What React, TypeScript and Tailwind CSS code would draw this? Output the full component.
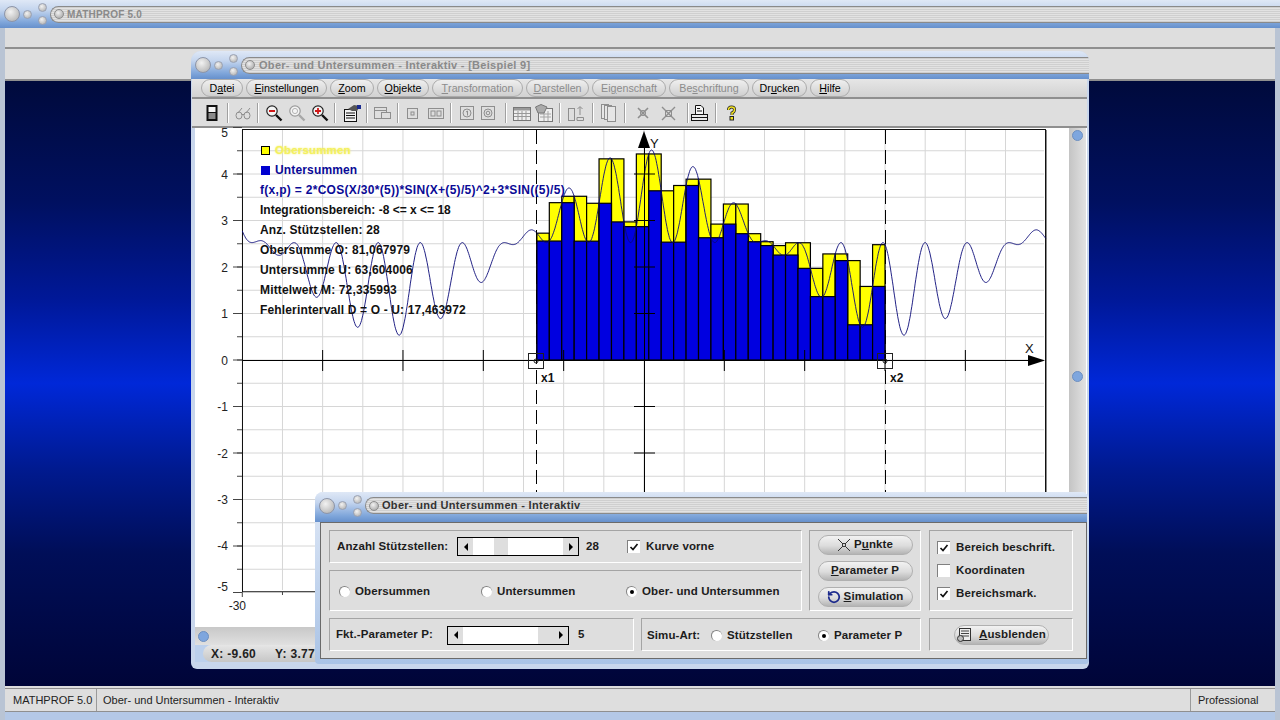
import { ReactNode } from "react";
import { RotateCcw } from "lucide-react";

const f = (x: number) => 2 * Math.cos((x / 30) * 5) * Math.sin(x + 1) ** 2 + 3 * Math.sin(1);
const sx = (x: number) => 644 + x * 13.39;
const sy = (v: number) => 360 - v * 46.5;

const curve = Array.from({ length: 1201 }, (_, i) => {
  const x = -30 + i * 0.05;
  return `${sx(x).toFixed(1)},${sy(f(x)).toFixed(1)}`;
}).join(" ");

// the app only samples the end points of each interval, so peaks poke out of the bars
const bars = Array.from({ length: 28 }, (_, i) => {
  const step = 26 / 28;
  const a = -8 + i * step;
  const b = a + step;
  return { x: sx(a), w: sx(b) - sx(a), hi: Math.max(f(a), f(b)), lo: Math.min(f(a), f(b)) };
});

const gridX = Array.from({ length: 21 }, (_, i) => -30 + i * 3);
const gridY = Array.from({ length: 19 }, (_, i) => -4.5 + i * 0.5);
const wholeY = [5, 4, 3, 2, 1, 0, -1, -2, -3, -4, -5];
const tickX = [-24, -18, -12, -6, 6, 12, 18, 24];
const labelY: Record<number, number> = { 5: 133, 4: 175, 3: 221, 2: 268, 1: 314, 0: 361, [-1]: 407, [-2]: 454, [-3]: 500, [-4]: 546, [-5]: 587 };

const menu = [
  { pre: "D", u: "a", post: "tei", w: "w-[42px]", on: true },
  { pre: "", u: "E", post: "instellungen", w: "w-[81px]", on: true },
  { pre: "", u: "Z", post: "oom", w: "w-[44px]", on: true },
  { pre: "", u: "O", post: "bjekte", w: "w-[52px]", on: true },
  { pre: "", u: "T", post: "ransformation", w: "w-[91px]", on: false },
  { pre: "", u: "D", post: "arstellen", w: "w-[63px]", on: false },
  { pre: "Ei", u: "g", post: "enschaft", w: "w-[74px]", on: false },
  { pre: "Be", u: "s", post: "chriftung", w: "w-[80px]", on: false },
  { pre: "Dr", u: "u", post: "cken", w: "w-[55px]", on: true },
  { pre: "", u: "H", post: "ilfe", w: "w-[40px]", on: true },
];

const TitleBar = ({ title, tone, h }: { title: string; tone: string; h: string }) => (
  <div className={`flex items-center ${h} pl-[4px] bg-[linear-gradient(#dfe8f6,#c4d5ee_35%,#7ea5da_80%,#6690cc)]`}>
    <span className="h-[16px] w-[16px] shrink-0 rounded-full border border-[#8d95a8] bg-[radial-gradient(circle_at_40%_35%,#f2f2f2,#a9a9a9)]" />
    <span className="ml-[3px] h-[9px] w-[9px] shrink-0 rounded-full border border-[#9aa1b2] bg-[radial-gradient(circle_at_40%_35%,#f2f2f2,#a9a9a9)]" />
    <div className="ml-[6px] flex shrink-0 flex-col gap-[4px]">
      <span className="h-[9px] w-[9px] rounded-full border border-[#9aa1b2] bg-[radial-gradient(circle_at_40%_35%,#f2f2f2,#a9a9a9)]" />
      <span className="h-[9px] w-[9px] rounded-full border border-[#9aa1b2] bg-[radial-gradient(circle_at_40%_35%,#f2f2f2,#a9a9a9)]" />
    </div>
    <div className="ml-[3px] flex h-[17px] flex-1 items-center overflow-hidden rounded-l-full border-y border-l border-[#8a8a8a] bg-[repeating-linear-gradient(#cfcfcf_0_1px,#e2e2e2_1px_2px)] pl-[3px]">
      <span className="h-[10px] w-[10px] shrink-0 rounded-full border border-[#8d8d8d] bg-[radial-gradient(circle_at_40%_35%,#f2f2f2,#9c9c9c)]" />
      <span className={`ml-[3px] whitespace-nowrap font-['Liberation_Sans',sans-serif] font-bold ${tone}`}>{title}</span>
    </div>
  </div>
);

const Menu = () => (
  <div className="flex h-[20px] shrink-0 items-center gap-[3px] border-b-2 border-[#8f8f8f] bg-[linear-gradient(#e6e6e6,#d2d2d2)] pl-[9px]">
    {menu.map((m) => (
      <div
        key={m.post}
        className={`flex h-[18px] ${m.w} items-center justify-center rounded-full border border-[#ababab] bg-[linear-gradient(#efefef,#cfcfcf)] font-['Liberation_Sans',sans-serif] text-[10.7px] ${m.on ? "text-black" : "text-[#8c8c8c]"}`}
      >
        {m.pre}
        <u>{m.u}</u>
        {m.post}
      </div>
    ))}
  </div>
);

const Sep = ({ m }: { m: string }) => <span className={`h-[20px] w-[2px] shrink-0 border-l border-r border-l-[#a0a0a0] border-r-white ${m}`} />;

const Mag = ({ mode }: { mode: "minus" | "plain" | "plus" }) => {
  const dim = mode === "plain";
  return (
    <svg width="18" height="18" viewBox="0 0 18 18" className="shrink-0">
      <circle cx="7" cy="7" r="5.2" fill="#f4f4f4" stroke={dim ? "#9a9a9a" : "#222"} strokeWidth="1.2" />
      <path d="M11 11 L16.5 16.5" stroke={dim ? "#a8a8a8" : "#111"} strokeWidth="2.4" />
      {mode !== "plain" && <path d="M4 7 H10" stroke="#d01818" strokeWidth="1.8" />}
      {mode === "plus" && <path d="M7 4 V10" stroke="#d01818" strokeWidth="1.8" />}
      {dim && <circle cx="7" cy="7" r="2.6" fill="none" stroke="#b5b5b5" />}
    </svg>
  );
};

const Ico = ({ w, children, m = "" }: { w: number; children: ReactNode; m?: string }) => (
  <svg width={w} height="18" viewBox={`0 0 ${w} 18`} className={`shrink-0 ${m}`}>
    {children}
  </svg>
);

const Toolbar = () => (
  <div className="flex h-[29px] shrink-0 items-center border-b-2 border-[#8f8f8f] bg-[#dedede] pl-[14px]">
    <Ico w={12}>
      <rect x="0.5" y="1" width="11" height="16" fill="#111" />
      <rect x="2.5" y="3" width="7" height="5" fill="#f4f4f4" />
      <rect x="2.5" y="9" width="7" height="6" fill="#8a8a8a" />
    </Ico>
    <Sep m="ml-[9px] mr-[6px]" />
    <Ico w={17}>
      <g fill="none" stroke="#8e8e8e">
        <ellipse cx="4" cy="11.5" rx="3" ry="3.5" />
        <ellipse cx="12" cy="11.5" rx="3" ry="3.5" />
        <path d="M7 11 Q8 9 9 11 M3 9 L7 4 M11 9 L15 4" />
      </g>
    </Ico>
    <Sep m="ml-[5px] mr-[6px]" />
    <Mag mode="minus" />
    <span className="w-[5px]" />
    <Mag mode="plain" />
    <span className="w-[5px]" />
    <Mag mode="plus" />
    <Sep m="ml-[5px] mr-[7px]" />
    <Ico w={18}>
      <rect x="1.5" y="5.5" width="12" height="12" fill="#f4f4f4" stroke="#111" />
      <path d="M3 9 H12 M3 11.5 H12 M3 14 H12" stroke="#111" />
      <path d="M5 5 L11 1 L17 2 L14 7 L9 7 Z" fill="#555" />
      <rect x="14" y="1" width="4" height="4" fill="#1a2a90" />
    </Ico>
    <Sep m="ml-[5px] mr-[6px]" />
    <Ico w={17}>
      <g fill="none" stroke="#8e8e8e">
        <rect x="0.5" y="3.5" width="12" height="11" />
        <path d="M0.5 6.5 H12.5" />
        <rect x="7.5" y="8.5" width="9" height="6" fill="#dedede" />
      </g>
    </Ico>
    <Sep m="ml-[6px] mr-[8px]" />
    <Ico w={11}>
      <g fill="none" stroke="#8e8e8e">
        <rect x="0.5" y="4.5" width="10" height="10" />
        <rect x="4" y="8" width="3" height="3" />
      </g>
    </Ico>
    <Ico w={16} m="ml-[10px]">
      <g fill="none" stroke="#8e8e8e">
        <rect x="0.5" y="4.5" width="15" height="10" />
        <rect x="3" y="7" width="4" height="5" />
        <rect x="9" y="7" width="4" height="5" />
      </g>
    </Ico>
    <Sep m="ml-[6px] mr-[8px]" />
    <Ico w={14}>
      <g fill="none" stroke="#8e8e8e">
        <rect x="0.5" y="2.5" width="13" height="13" />
        <circle cx="7" cy="9" r="4" />
        <path d="M6 8 L7.5 7 V11.5" />
      </g>
    </Ico>
    <Ico w={14} m="ml-[7px]">
      <g fill="none" stroke="#8e8e8e">
        <rect x="0.5" y="2.5" width="13" height="13" />
        <circle cx="7" cy="9" r="4" />
        <circle cx="7" cy="9" r="1.8" />
      </g>
    </Ico>
    <Sep m="ml-[10px] mr-[6px]" />
    <Ico w={18}>
      <rect x="0.5" y="3.5" width="17" height="13" fill="#efefef" stroke="#777" />
      <rect x="1" y="4" width="16" height="2.5" fill="#999" />
      <path d="M1 9.5 H17 M1 12.5 H17 M5 7 V16 M9 7 V16 M13 7 V16" stroke="#999" />
    </Ico>
    <Ico w={18} m="ml-[4px]">
      <rect x="3.5" y="4.5" width="14" height="13" fill="#efefef" stroke="#777" />
      <path d="M5 10 H16 M5 13 H16 M9 7 V17 M13 7 V17" stroke="#a5a5a5" />
      <path d="M0.5 3 L6 0.5 L12 3 L9 9 L3 9 Z" fill="#aaa" stroke="#777" />
    </Ico>
    <Sep m="ml-[6px] mr-[7px]" />
    <Ico w={16}>
      <g fill="none" stroke="#8e8e8e">
        <rect x="0.5" y="4.5" width="6" height="12" />
        <path d="M9 13.5 H15.5 V16.5 H9 Z M12 11 V3 M9.5 5 L12 2.5 L14.5 5" />
      </g>
    </Ico>
    <Sep m="ml-[8px] mr-[7px]" />
    <Ico w={15}>
      <g fill="#e6e6e6" stroke="#8e8e8e">
        <rect x="0.5" y="0.5" width="7" height="14" />
        <rect x="3.5" y="1.5" width="7" height="14" />
        <rect x="6.5" y="2.5" width="8" height="15" />
      </g>
    </Ico>
    <Sep m="ml-[8px] mr-[10px]" />
    <Ico w={14}>
      <path d="M2 4 L12 14 M12 4 L2 14" stroke="#8e8e8e" strokeWidth="1.6" />
      <circle cx="7" cy="9" r="2.6" fill="none" stroke="#8e8e8e" />
    </Ico>
    <Ico w={15} m="ml-[11px]">
      <path d="M1 3 L14 16 M14 3 L1 16" stroke="#8e8e8e" strokeWidth="1.4" />
      <rect x="4.5" y="6.5" width="6" height="6" fill="none" stroke="#8e8e8e" />
    </Ico>
    <Sep m="ml-[11px] mr-[2px]" />
    <Ico w={17}>
      <rect x="0.5" y="10.5" width="16" height="6" fill="#e8e8e8" stroke="#111" />
      <path d="M0.5 13.5 H16.5" stroke="#111" />
      <path d="M4.5 10 V1.5 H10 L12.5 4 V10" fill="#f6f6f6" stroke="#111" />
      <path d="M6 4.5 H9 M6 7 H11" stroke="#111" />
    </Ico>
    <Sep m="ml-[7px] mr-[8px]" />
    <Ico w={13}>
      <path d="M3.5 6 Q3.5 3 6.5 3 Q9.5 3 9.5 5.5 Q9.5 8 7 9 V11" fill="none" stroke="#222" strokeWidth="3" />
      <path d="M3.5 6 Q3.5 3 6.5 3 Q9.5 3 9.5 5.5 Q9.5 8 7 9 V11" fill="none" stroke="#f0e020" strokeWidth="1.5" />
      <rect x="5" y="12.5" width="3.5" height="3.5" fill="#f0e020" stroke="#222" />
    </Ico>
  </div>
);

const Chart = () => (
  <svg viewBox="195 128 874 499" className="block h-[499px] w-[874px] overflow-visible">
    <rect x="242" y="129" width="803" height="462" fill="#fff" />
    <g stroke="#d6d6d6">
      {gridX.map((x) => (
        <line key={x} x1={sx(x)} x2={sx(x)} y1="130" y2="590" />
      ))}
      {gridY.map((v) => (
        <line key={v} x1="243" x2="1044" y1={sy(v)} y2={sy(v)} />
      ))}
    </g>
    <rect x="242.5" y="129.5" width="803" height="462" fill="none" stroke="#111" />
    <path d="M1046.5 130 V592 H243" fill="none" stroke="#8a8a8a" />
    <g stroke="#444">
      {wholeY.map((v) => (
        <line key={v} x1="233" x2="242" y1={sy(v)} y2={sy(v)} />
      ))}
      {gridY.map((v) => (
        <line key={v} x1="237" x2="242" y1={sy(v)} y2={sy(v)} />
      ))}
      {gridX.map((x) => (
        <line key={x} x1={sx(x)} x2={sx(x)} y1="592" y2={x % 6 === 0 ? 597 : 595} />
      ))}
    </g>
    <g fontFamily="'Liberation Sans', sans-serif" fontSize="12" fill="#222" textAnchor="end">
      {wholeY.map((v) => (
        <text key={v} x="228" y={labelY[v] + 4}>
          {v}
        </text>
      ))}
      <text x="246" y="610">
        -30
      </text>
    </g>
    {bars.map((b) => (
      <rect key={b.x} x={b.x} y={sy(b.hi)} width={b.w} height={360 - sy(b.hi)} fill="#ffff00" stroke="#000" strokeWidth="1.2" />
    ))}
    {bars.map((b) => (
      <rect key={b.x} x={b.x} y={sy(b.lo)} width={b.w} height={360 - sy(b.lo)} fill="#0000e0" stroke="#000" strokeWidth="1.2" />
    ))}
    <polyline points={curve} fill="none" stroke="#0a0a78" strokeWidth="0.9" />
    <g stroke="#000">
      <line x1="243" x2="1030" y1="360.5" y2="360.5" />
      <line x1="644.5" x2="644.5" y1="146" y2="591" />
      {tickX.map((x) => (
        <line key={x} x1={sx(x)} x2={sx(x)} y1="350" y2="371" />
      ))}
      {wholeY
        .filter((v) => v !== 0 && v !== 5 && v !== -5)
        .map((v) => (
          <line key={v} x1="634" x2="655" y1={sy(v)} y2={sy(v)} />
        ))}
      <line x1="536.5" x2="536.5" y1="130" y2="591" strokeDasharray="14 6" />
      <line x1="885.5" x2="885.5" y1="130" y2="591" strokeDasharray="14 6" />
    </g>
    <path d="M644 131 L650 148 L638 148 Z" fill="#000" />
    <path d="M1045 360.5 L1028 355 L1028 366 Z" fill="#000" />
    <g fill="none" stroke="#222">
      <rect x="528.5" y="353.5" width="15" height="15" />
      <rect x="877.5" y="353.5" width="15" height="15" />
      <circle cx="536" cy="361" r="2" />
      <circle cx="885" cy="361" r="2" />
    </g>
    <g fontFamily="'Liberation Sans', sans-serif" fontSize="13" fill="#111">
      <text x="650" y="148">
        Y
      </text>
      <text x="1025" y="353">
        X
      </text>
      <text x="541" y="382" fontSize="12" fontWeight="700">
        x1
      </text>
      <text x="890" y="382" fontSize="12" fontWeight="700">
        x2
      </text>
    </g>
  </svg>
);

const Legend = () => (
  <div className="absolute left-[65px] top-[12px] flex flex-col font-['Liberation_Sans',sans-serif] text-[12px] font-bold leading-[20px] tracking-[0.15px] text-[#111]">
    <div className="flex items-center">
      <span className="ml-[1px] h-[9px] w-[9px] border border-black bg-[#ffff00]" />
      <span className="ml-[5px] text-[11.5px] text-[#f4f060] [text-shadow:0_0_2px_#f0ec60]">Obersummen</span>
    </div>
    <div className="flex items-center">
      <span className="ml-[1px] h-[9px] w-[9px] bg-[#0000d0]" />
      <span className="ml-[5px] text-[#0a0a96]">Untersummen</span>
    </div>
    <span className="tracking-[0.3px] text-[#0a0a96]">f(x,p) = 2*COS(X/30*(5))*SIN(X+(5)/5)^2+3*SIN((5)/5)</span>
    <span className="tracking-[0px]">Integrationsbereich: -8 &lt;= x &lt;= 18</span>
    <span>Anz. Stützstellen: 28</span>
    <span>Obersumme O: 81,067979</span>
    <span>Untersumme U: 63,604006</span>
    <span>Mittelwert M: 72,335993</span>
    <span>Fehlerintervall D = O - U: 17,463972</span>
  </div>
);

const Window = () => (
  <div className="absolute left-[191px] top-[51px] flex h-[618px] w-[898px] flex-col overflow-hidden rounded-t-[10px] rounded-b-[6px] bg-[#c8d6ec]">
    <TitleBar title="Ober- und Untersummen - Interaktiv - [Beispiel 9]" tone="ml-[4px] text-[11px] tracking-[0.3px] text-[#8a8a8a]" h="h-[28px]" />
    <div className="mr-[2px] flex flex-1 flex-col pl-[1px]">
      <Menu />
      <Toolbar />
      <div className="relative ml-[3px] flex h-[499px] bg-white">
        <Chart />
        <Legend />
        <div className="flex w-[17px] flex-col items-center bg-[linear-gradient(90deg,#c4c4c4,#e2e2e2)]">
          <span className="mt-[2px] h-[11px] w-[11px] rounded-full border border-[#6d8fc0] bg-[#7ea6de]" />
          <span className="mt-[230px] h-[11px] w-[11px] rounded-full border border-[#6d8fc0] bg-[#7ea6de]" />
        </div>
      </div>
      <div className="ml-[3px] flex h-[18px] items-center bg-[linear-gradient(#c8c8c8,#e0e0e0)] pl-[3px]">
        <span className="h-[11px] w-[11px] rounded-full border border-[#6d8fc0] bg-[#7ea6de]" />
      </div>
      <div className="ml-[3px] flex h-[17px] bg-[#bcd0ec] pl-[8px]">
        <div className="flex flex-1 items-center gap-[19px] rounded-l-full bg-[linear-gradient(#e6e6e6,#c6c6c6)] pl-[8px] pt-[1px] font-['Liberation_Sans',sans-serif] text-[12px] font-semibold tracking-[0.3px] text-[#222]">
          <span>X: -9.60</span>
          <span>Y: 3.77</span>
        </div>
      </div>
    </div>
  </div>
);

const Scroll = ({ thumb }: { thumb: string }) => (
  <div className="flex h-[19px] w-[122px] shrink-0 items-center border border-black bg-white">
    <span className="flex h-full w-[15px] items-center justify-center bg-[#dedede]">
      <span className="border-y-[4px] border-r-[4px] border-y-transparent border-r-black" />
    </span>
    <span className={`h-full flex-1 ${thumb}`} />
    <span className="flex h-full w-[15px] items-center justify-center bg-[#dedede]">
      <span className="border-y-[4px] border-l-[4px] border-y-transparent border-l-black" />
    </span>
  </div>
);

const Check = ({ on, label }: { on: boolean; label: string }) => (
  <div className="flex items-center gap-[6px]">
    <span className="flex h-[13px] w-[13px] shrink-0 items-center justify-center border-t border-l border-t-[#808080] border-l-[#808080] bg-white">
      {on && (
        <svg width="10" height="10" viewBox="0 0 10 10">
          <path d="M1.5 5 L4 7.5 L8.5 2" fill="none" stroke="#111" strokeWidth="1.7" />
        </svg>
      )}
    </span>
    {label}
  </div>
);

const Radio = ({ on, label, w }: { on: boolean; label: string; w: string }) => (
  <div className={`flex items-center gap-[5px] ${w}`}>
    <span className="-mt-[1px] flex h-[11px] w-[11px] shrink-0 items-center justify-center rounded-full border-t border-l border-[#808080] bg-white">
      {on && <span className="h-[4px] w-[4px] rounded-full bg-black" />}
    </span>
    {label}
  </div>
);

const Pill = ({ icon, pre, u, post }: { icon?: ReactNode; pre: string; u: string; post: string }) => (
  <div className="flex h-[20px] w-[95px] items-center justify-center gap-[3px] rounded-full border border-[#b0b0b0] bg-[linear-gradient(#f2f2f2,#dcdcdc_55%,#b4b4b4)]">
    {icon}
    <span>
      {pre}
      <u>{u}</u>
      {post}
    </span>
  </div>
);

const group = "border border-t-[#a4a4a4] border-l-[#a4a4a4] border-r-white border-b-white";

const Dialog = () => (
  <div className="absolute left-[315px] top-[492px] flex h-[172px] w-[774px] flex-col overflow-hidden rounded-t-[8px] rounded-b-[4px] bg-[linear-gradient(#dfe8f6,#a9c3e6)] pb-[5px] pr-[2px]">
    <TitleBar title="Ober- und Untersummen - Interaktiv" tone="text-[11px] tracking-[0.3px] text-[#333]" h="h-[30px] pb-[3px]" />
    <div className="ml-[5px] flex flex-1 flex-col gap-[7px] border border-[#6a6a6a] bg-[#dedede] px-[8px] py-[7px] font-['Liberation_Sans',sans-serif] text-[11.5px] font-bold tracking-[0.1px] text-[#1c1c1c]">
      <div className="flex gap-[7px]">
        <div className="flex w-[473px] flex-col gap-[7px]">
          <div className={`flex h-[33px] items-center pl-[7px] ${group}`}>
            <span className="w-[120px]">Anzahl Stützstellen:</span>
            <Scroll thumb="bg-[linear-gradient(90deg,#fff_0_21px,#dedede_21px_35px,#fff_35px)]" />
            <span className="ml-[7px] w-[41px]">28</span>
            <Check on label="Kurve vorne" />
          </div>
          <div className={`flex h-[41px] items-center pl-[9px] pt-[3px] ${group}`}>
            <Radio on={false} label="Obersummen" w="w-[142px]" />
            <Radio on={false} label="Untersummen" w="w-[145px]" />
            <Radio on label="Ober- und Untersummen" w="w-[170px]" />
          </div>
        </div>
        <div className={`flex h-[81px] w-[112px] flex-col items-center justify-center gap-[6px] ${group}`}>
          <Pill
            pre="P"
            u="u"
            post="nkte"
            icon={
              <svg width="14" height="14" viewBox="0 0 14 14">
                <path d="M1 1 L13 13 M13 1 L1 13" stroke="#333" />
                <circle cx="7" cy="7" r="1.6" fill="#eee" stroke="#333" />
              </svg>
            }
          />
          <Pill pre="" u="P" post="arameter P" />
          <Pill pre="" u="S" post="imulation" icon={<RotateCcw size={14} strokeWidth={3} className="text-[#1c2a8c]" />} />
        </div>
        <div className={`ml-[1px] flex h-[81px] w-[144px] flex-col justify-center gap-[6px] pl-[7px] ${group}`}>
          <Check on label="Bereich beschrift." />
          <Check on={false} label="Koordinaten" />
          <Check on label="Bereichsmark." />
        </div>
      </div>
      <div className="flex gap-[7px]">
        <div className={`flex h-[33px] w-[305px] items-center pl-[6px] pt-[1px] ${group}`}>
          <span className="w-[111px]">Fkt.-Parameter P:</span>
          <Scroll thumb="bg-[linear-gradient(90deg,#fff_0_75px,#dedede_75px)]" />
          <span className="ml-[9px]">5</span>
        </div>
        <div className={`flex h-[33px] w-[280px] items-center pl-[5px] pt-[2px] ${group}`}>
          <span className="w-[64px]">Simu-Art:</span>
          <Radio on={false} label="Stützstellen" w="w-[107px]" />
          <Radio on label="Parameter P" w="w-[95px]" />
        </div>
        <div className={`ml-[1px] flex h-[33px] w-[144px] items-center justify-center ${group}`}>
          <Pill
            pre=""
            u="A"
            post="usblenden"
            icon={
              <svg width="20" height="16" viewBox="0 0 20 16">
                <rect x="3.5" y="1.5" width="11" height="12" fill="#eee" stroke="#333" />
                <path d="M5 4 H13 M5 6.5 H13 M5 9 H13" stroke="#444" />
                <circle cx="4.5" cy="11.5" r="3" fill="#bbb" stroke="#333" />
              </svg>
            }
          />
        </div>
      </div>
    </div>
  </div>
);

export default function App() {
  return (
    <div className="relative flex h-[720px] w-[1280px] flex-col overflow-hidden bg-[#b4c8e6] font-['Liberation_Sans',sans-serif]">
      <div className="h-[28px] shrink-0">
        <TitleBar title="MATHPROF 5.0" tone="text-[10px] tracking-[0.2px] text-[#8a8a8a]" h="h-[28px]" />
      </div>
      <div className="flex flex-1 flex-col border-x-[5px] border-x-[#b9c4d4]">
        <div className="h-[21px] shrink-0 border-b-2 border-[#8f8f8f] bg-[#dedede]" />
        <div className="h-[32px] shrink-0 border-b-2 border-[#8f8f8f] bg-[#dedede]" />
        <div className="h-[605px] shrink-0 bg-[linear-gradient(#000a3c,#001060_20%,#001898_36%,#0028d8_50%,#001a90_64%,#000e58_78%,#000538)]" />
        <div className="h-[26px] shrink-0 bg-[#dedede] pt-[2px]">
          <div className="flex h-[24px] border-y border-y-[#8f8f8f] text-[11px] leading-[22px] text-[#222]">
            <span className="w-[92px] border-r border-[#9a9a9a] pl-[8px]">MATHPROF 5.0</span>
            <span className="flex-1 border-r border-[#9a9a9a] pl-[6px]">Ober- und Untersummen - Interaktiv</span>
            <span className="w-[84px] pl-[7px]">Professional</span>
          </div>
        </div>
      </div>
      <Window />
      <Dialog />
    </div>
  );
}
